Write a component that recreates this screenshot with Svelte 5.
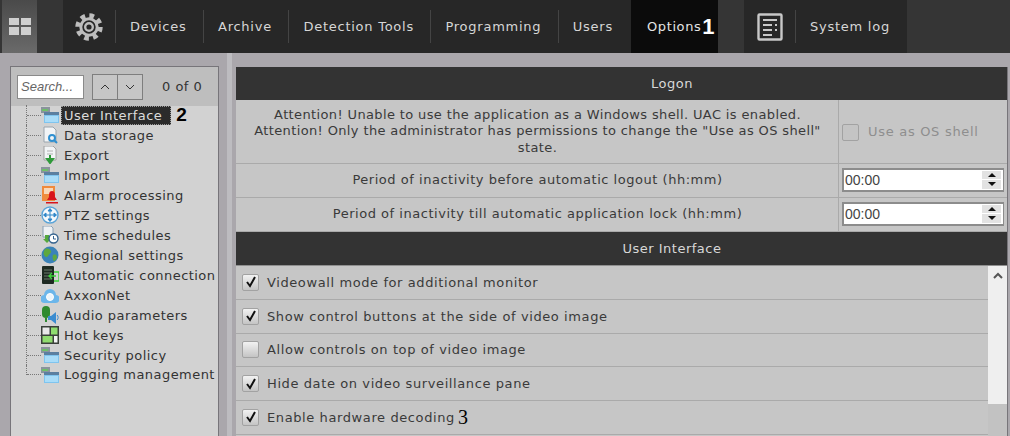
<script>
  const navItems = ['Devices', 'Archive', 'Detection Tools', 'Programming', 'Users'];
  const tree = [
    { label: 'User Interface', icon: 'folder', selected: true },
    { label: 'Data storage', icon: 'storage' },
    { label: 'Export', icon: 'export' },
    { label: 'Import', icon: 'folder' },
    { label: 'Alarm processing', icon: 'alarm' },
    { label: 'PTZ settings', icon: 'ptz' },
    { label: 'Time schedules', icon: 'time' },
    { label: 'Regional settings', icon: 'globe' },
    { label: 'Automatic connection', icon: 'auto' },
    { label: 'AxxonNet', icon: 'cloud' },
    { label: 'Audio parameters', icon: 'audio' },
    { label: 'Hot keys', icon: 'keys' },
    { label: 'Security policy', icon: 'folder' },
    { label: 'Logging management', icon: 'folder' }
  ];
  const options = [
    { label: 'Videowall mode for additional monitor', checked: true },
    { label: 'Show control buttons at the side of video image', checked: true },
    { label: 'Allow controls on top of video image', checked: false },
    { label: 'Hide date on video surveillance pane', checked: true },
    { label: 'Enable hardware decoding', checked: true, mark: '3' }
  ];
</script>

<div class="page">
  <header class="topbar">
    <div class="tile">
      <div class="tile-grid"><i></i><i></i><i></i><i></i></div>
    </div>
    <nav class="nav-main">
      <div class="gear">
        <svg width="30" height="30" viewBox="0 0 30 30">
          <circle cx="15" cy="15" r="11.2" fill="none" stroke="#bdbdbd" stroke-width="5" stroke-dasharray="4.6 4.2" />
          <circle cx="15" cy="15" r="8.2" fill="none" stroke="#bdbdbd" stroke-width="3" />
          <circle cx="15" cy="15" r="3.8" fill="none" stroke="#bdbdbd" stroke-width="2.4" />
        </svg>
      </div>
      {#each navItems as item}
        <div class="nav-item"><span class="sep"></span><span class="nav-label">{item}</span></div>
      {/each}
      <div class="nav-item active"><span class="nav-label">Options</span><b class="mark-light">1</b></div>
    </nav>
    <nav class="nav-log">
      <div class="log-icon">
        <svg width="26" height="28" viewBox="0 0 26 28">
          <rect x="1.5" y="1.5" width="23" height="25" rx="1" fill="none" stroke="#c8c8c8" stroke-width="2.4" />
          <path d="M6 7h14M6 12h9M18 12h2M6 17h9M18 17h2M6 22h9" stroke="#c8c8c8" stroke-width="2" fill="none" />
        </svg>
      </div>
      <div class="nav-item"><span class="sep"></span><span class="nav-label">System log</span></div>
    </nav>
  </header>

  <main class="content">
    <aside class="sidebar">
      <div class="search-row">
        <div class="search">Search...</div>
        <div class="arrows">
          <button class="arrow" aria-label="Previous">
            <svg width="10" height="6" viewBox="0 0 10 6"><path d="M1 5l4-4 4 4" fill="none" stroke="#333" /></svg>
          </button>
          <button class="arrow" aria-label="Next">
            <svg width="10" height="6" viewBox="0 0 10 6"><path d="M1 1l4 4 4-4" fill="none" stroke="#333" /></svg>
          </button>
        </div>
        <span class="count">0 of 0</span>
      </div>
      <ul class="tree">
        {#each tree as node}
          <li class="node">
            <span class="dots"></span>
            <svg class="node-icon" width="18" height="18" viewBox="0 0 18 18">
              {#if node.icon === 'folder'}
                <rect x="0" y="1" width="9" height="6" fill="#8a949c" />
                <rect x="1" y="3" width="6" height="2" fill="#6fbf6a" />
                <rect x="3" y="6" width="15" height="11" fill="#7fc4ee" />
                <rect x="3" y="6" width="15" height="3" fill="#5b7fa0" />
                <rect x="4" y="10" width="13" height="6" fill="#a9dcf8" />
              {:else if node.icon === 'storage'}
                <path d="M3 1h9l3 3v12H3z" fill="#f2f4f6" stroke="#9aa4ac" />
                <circle cx="11" cy="12" r="3" fill="none" stroke="#2f8fd0" stroke-width="2" />
                <path d="M13 14l3 3" stroke="#2f8fd0" stroke-width="2" />
              {:else if node.icon === 'export'}
                <path d="M3 0h9l3 3v11H3z" fill="#f2f4f6" stroke="#a0a0a0" />
                <path d="M6 5h6M6 8h6" stroke="#b0b0b0" />
                <path d="M9 9v5M6 13l3 4 3-4z" stroke="#2f9a3a" stroke-width="2" fill="#2f9a3a" />
              {:else if node.icon === 'alarm'}
                <rect x="1" y="0" width="13" height="15" fill="#ef8a3c" />
                <rect x="3" y="2" width="9" height="6" fill="#f8d8b8" />
                <path d="M11 5c-3 0-3 3-3 6l-2 3h10l-2-3c0-3 0-6-3-6z" fill="#d8141c" />
                <rect x="5" y="16" width="12" height="1.5" fill="#d8141c" />
              {:else if node.icon === 'ptz'}
                <circle cx="9" cy="9" r="8" fill="#f4f8fb" stroke="#5aa4d8" stroke-width="1.4" />
                <path d="M9 3v12M3 9h12M9 2.5L7 5h4zM9 15.5L7 13h4zM2.5 9L5 7v4zM15.5 9L13 7v4z" stroke="#2f86c8" fill="#2f86c8" />
              {:else if node.icon === 'time'}
                <path d="M2 0h8l2 2v9H2z" fill="#eef1f4" stroke="#8aa0b4" />
                <path d="M4 9v4H2l4 4 4-4H8V9z" fill="#55a83c" />
                <circle cx="12.5" cy="12.5" r="4.5" fill="#fff" stroke="#33628e" stroke-width="1.4" />
                <path d="M12.5 10v3H15" stroke="#33628e" fill="none" />
              {:else if node.icon === 'globe'}
                <circle cx="9" cy="9" r="8.5" fill="#3a82b8" />
                <path d="M4 3c3-1 5 0 6 2s-2 3-3 5-3 1-4-1 0-4 1-6zM12 9c2-1 4 0 4 2s-2 4-3 4-2-5-1-6z" fill="#5fa83e" />
              {:else if node.icon === 'auto'}
                <rect x="1" y="0" width="12" height="18" rx="1" fill="#1e2a22" />
                <path d="M3 4h8M3 7h8M3 10h8M3 13h8" stroke="#6a7a6a" />
                <path d="M13 6h5v9h-5M15 10H8M11 7l-3 3 3 3" fill="none" stroke="#3bd43b" stroke-width="1.3" />
              {:else if node.icon === 'cloud'}
                <path d="M4 17a4 4 0 0 1-1-8 6 6 0 0 1 12 0 4 4 0 0 1-1 8z" fill="#6bb6ea" />
                <circle cx="9" cy="11" r="3.5" fill="#eaf5fc" stroke="#fff" />
              {:else if node.icon === 'audio'}
                <rect x="1" y="0" width="8" height="12" rx="4" fill="#2f8a2f" />
                <path d="M5 12v4" stroke="#2f8a2f" stroke-width="2" />
                <path d="M7 10h3l5-4v12l-5-4H7z" fill="#3a8cd0" />
                <path d="M16 9c1.5 1 1.5 4 0 5" stroke="#3a8cd0" fill="none" />
              {:else if node.icon === 'keys'}
                <rect x="0" y="0" width="18" height="18" fill="#3a403a" />
                <rect x="1.5" y="1.5" width="7" height="7" fill="#e8e8e8" />
                <rect x="10" y="1.5" width="6.5" height="7" fill="#8fdc6f" />
                <rect x="1.5" y="10" width="10" height="6.5" fill="#8fdc6f" />
                <rect x="13" y="10" width="3.5" height="6.5" fill="#f4f4f4" />
              {/if}
            </svg>
            <span class="node-label" class:selected={node.selected}>{node.label}</span>
            {#if node.selected}<b class="mark-dark">2</b>{/if}
          </li>
        {/each}
      </ul>
    </aside>

    <div class="splitter"></div>

    <section class="panel">
      <h2 class="band">Logon</h2>
      <div class="row row-tall">
        <div class="cell-text attention">
          Attention! Unable to use the application as a Windows shell. UAC is enabled.<br />
          Attention! Only the administrator has permissions to change the "Use as OS shell"<br />
          state.
        </div>
        <div class="cell-ctl">
          <span class="check disabled"></span>
          <span class="disabled-label">Use as OS shell</span>
        </div>
      </div>
      <div class="row">
        <div class="cell-text">Period of inactivity before automatic logout (hh:mm)</div>
        <div class="cell-ctl">
          <div class="spin">
            <span>00:00</span>
            <div class="spin-btns"><i class="up"></i><i class="down"></i></div>
          </div>
        </div>
      </div>
      <div class="row">
        <div class="cell-text">Period of inactivity till automatic application lock (hh:mm)</div>
        <div class="cell-ctl">
          <div class="spin">
            <span>00:00</span>
            <div class="spin-btns"><i class="up"></i><i class="down"></i></div>
          </div>
        </div>
      </div>
      <h2 class="band">User Interface</h2>
      <div class="list-wrap">
        <div class="list">
          {#each options as opt}
            <div class="opt">
              <span class="check">
                {#if opt.checked}
                  <svg width="14" height="14" viewBox="0 0 14 14"><path d="M3 7l3 4 5-9" fill="none" stroke="#111" stroke-width="2" /></svg>
                {/if}
              </span>
              <span class="opt-label">{opt.label}</span>
              {#if opt.mark}<span class="mark-serif">{opt.mark}</span>{/if}
            </div>
          {/each}
        </div>
        <div class="scrollbar">
          <svg width="10" height="7" viewBox="0 0 10 7"><path d="M1 6l4-4 4 4" fill="none" stroke="#555" stroke-width="2" /></svg>
          <div class="thumb"></div>
        </div>
      </div>
    </section>
  </main>
</div>

<style>
  :global(body) {
    margin: 0;
    overflow: hidden;
    background: #aaa7ac;
  }

  .page {
    width: 1010px;
    height: 436px;
    display: flex;
    flex-direction: column;
    font-family: "DejaVu Sans", sans-serif;
    font-size: 13px;
    color: #333;
    overflow: hidden;
  }

  .topbar {
    height: 53px;
    flex: none;
    display: flex;
    background: #353535;
    padding-left: 2px;
  }

  .tile {
    width: 35px;
    display: flex;
    align-items: center;
    justify-content: center;
    background: linear-gradient(#4a4a4a, #6a6a6a);
  }

  .tile-grid {
    display: grid;
    grid-template-columns: 10px 10px;
    grid-template-rows: 7px 8px;
    gap: 2px;
  }

  .tile-grid i {
    background: #cfcfcf;
  }

  .nav-main {
    margin-left: 26px;
    display: flex;
    background: #272727;
    width: 655px;
  }

  .nav-log {
    margin-left: 26px;
    display: flex;
    background: #272727;
    width: 163px;
  }

  .gear {
    width: 52px;
    display: flex;
    align-items: center;
    justify-content: center;
  }

  .nav-item {
    display: flex;
    align-items: center;
    padding: 0 16.5px 0 15px;
    position: relative;
    color: #d6d6d6;
    letter-spacing: 0.75px;
  }

  .nav-label {
    white-space: nowrap;
  }

  .sep {
    position: absolute;
    left: 0;
    top: 10px;
    bottom: 10px;
    width: 1px;
    background: #444;
  }

  .nav-item.active {
    background: #0b0b0b;
    margin-left: auto;
    width: 87px;
    box-sizing: border-box;
    padding: 0 0 0 16px;
    color: #e4e4e4;
    letter-spacing: 0.6px;
  }

  .mark-light {
    font-family: "Liberation Sans", sans-serif;
    font-size: 22px;
    color: #fff;
    margin-left: 1px;
  }

  .log-icon {
    width: 51px;
    display: flex;
    align-items: center;
    justify-content: center;
  }

  .content {
    flex: 1;
    display: flex;
    min-height: 0;
    padding: 14px 2px 0 10px;
  }

  .sidebar {
    width: 207px;
    height: 370px;
    flex: none;
    margin-top: -1px;
    border: 1px solid #77757a;
    background: #d2d2d2;
  }

  .search-row {
    height: 39px;
    background: #bebebe;
    display: flex;
    align-items: center;
    padding-left: 6px;
    box-sizing: border-box;
  }

  .search {
    width: 67px;
    height: 24px;
    box-sizing: border-box;
    background: #fff;
    border: 1px solid #8a8a8a;
    font-family: "Liberation Sans", sans-serif;
    font-style: italic;
    font-size: 13px;
    color: #666;
    padding: 3px 0 0 3px;
  }

  .arrows {
    display: flex;
    margin-left: 8px;
  }

  .arrow {
    width: 26px;
    height: 26px;
    padding: 0;
    background: #c6c6c6;
    border: 1px solid #7e7e7e;
    display: flex;
    align-items: center;
    justify-content: center;
  }

  .arrow + .arrow {
    margin-left: -1px;
  }

  .count {
    margin-left: 19px;
    color: #333;
    white-space: nowrap;
    letter-spacing: 0.5px;
  }

  .tree {
    list-style: none;
    margin: -1px 0 0;
    padding: 0 0 0 15px;
  }

  .node {
    height: 20px;
    display: flex;
    align-items: center;
    border-left: 1px dotted #777;
    white-space: nowrap;
  }

  /* the guide line stops halfway down the last row */
  .node:last-child {
    height: 10px;
    align-items: flex-end;
  }

  .node:last-child .node-icon,
  .node:last-child .node-label {
    margin-bottom: -9px;
  }

  .dots {
    width: 14px;
    flex: none;
    border-top: 1px dotted #777;
  }

  .node-icon {
    flex: none;
  }

  .node-label {
    margin-left: 2px;
    padding: 2px 3px;
    color: #333;
    letter-spacing: 0.45px;
  }

  .node-label.selected {
    background: #2b2b2b;
    color: #dcdcdc;
    outline: 1px dotted #999;
    outline-offset: -1px;
    padding-right: 9px;
  }

  .mark-dark {
    font-family: "Liberation Sans", sans-serif;
    font-size: 19px;
    color: #000;
    margin-left: 5px;
  }

  .splitter {
    width: 5px;
    flex: none;
    margin: -14px 4px 0 8px;
    background: #bdbcc0;
  }

  .panel {
    flex: 1;
    min-width: 0;
    background: #c6c6c6;
    border-right: 1px solid #77757a;
    display: flex;
    flex-direction: column;
  }

  .band {
    margin: 0;
    height: 33px;
    flex: none;
    padding-left: 101px;
    background: #333;
    color: #d8d8d8;
    font-size: 13px;
    font-weight: normal;
    display: flex;
    align-items: center;
    justify-content: center;
    letter-spacing: 0.5px;
  }

  .row {
    height: 34px;
    flex: none;
    display: flex;
    border-bottom: 1px solid #aaa;
    box-sizing: border-box;
  }

  .row-tall {
    height: 64px;
  }

  .cell-text {
    width: 603px;
    flex: none;
    text-align: center;
    line-height: 16.5px;
    align-self: center;
    color: #3a3a3a;
    letter-spacing: 0.53px;
  }

  .cell-text.attention {
    letter-spacing: 0.37px;
  }

  .cell-ctl {
    flex: 1;
    display: flex;
    align-items: center;
    padding-left: 3px;
    border-left: 1px solid #aaa;
    margin-left: -1px;
    min-width: 0;
  }

  .disabled-label {
    color: #8e8e8e;
    margin-left: 9px;
    letter-spacing: 0.7px;
  }

  .check {
    width: 17px;
    height: 17px;
    box-sizing: border-box;
    flex: none;
    display: inline-flex;
    align-items: center;
    justify-content: center;
    border: 1px solid #a2a2a2;
    border-radius: 2px;
    background: linear-gradient(#f2f2f2, #c4c4c4);
  }

  .check.disabled {
    background: #c4c4c4;
    margin-top: 1px;
  }

  .spin {
    width: 162px;
    height: 24px;
    margin-bottom: 2px;
    box-sizing: border-box;
    background: #fff;
    border: 1px solid #8c8c8c;
    border-width: 2px 1px 2px 2px;
    display: flex;
    align-items: center;
    justify-content: space-between;
    color: #444;
    font-family: "Liberation Sans", sans-serif;
    font-size: 14px;
    padding-left: 1px;
  }

  .spin-btns {
    width: 19px;
    height: 18px;
    margin-right: 2px;
    display: flex;
    flex-direction: column;
    gap: 1px;
  }

  .spin-btns i {
    flex: 1;
    background: #e2e2e2;
    display: flex;
    align-items: center;
    justify-content: center;
  }

  .spin-btns i::before {
    content: "";
    border-left: 4px solid transparent;
    border-right: 4px solid transparent;
  }

  .spin-btns .up::before {
    border-bottom: 4px solid #111;
  }

  .spin-btns .down::before {
    border-top: 4px solid #111;
  }

  .list-wrap {
    flex: 1;
    display: flex;
    min-height: 0;
    border-top: 1px solid #8f8f8f;
  }

  .list {
    flex: 1;
    min-width: 0;
  }

  .opt {
    height: 33.75px;
    box-sizing: border-box;
    display: flex;
    align-items: center;
    padding-left: 6px;
    border-bottom: 1px solid #aaa;
    white-space: nowrap;
  }

  .opt-label {
    margin-left: 8px;
    color: #3a3a3a;
    letter-spacing: 0.6px;
  }

  .mark-serif {
    font-family: "Liberation Serif", serif;
    font-size: 20px;
    color: #000;
    margin-left: 3px;
  }

  .scrollbar {
    width: 19px;
    flex: none;
    background: #efefef;
    display: flex;
    flex-direction: column;
    align-items: center;
    padding-top: 6px;
    box-sizing: border-box;
  }

  .thumb {
    margin-top: auto;
    width: 100%;
    height: 32px;
    background: #c2c2c2;
  }
</style>
